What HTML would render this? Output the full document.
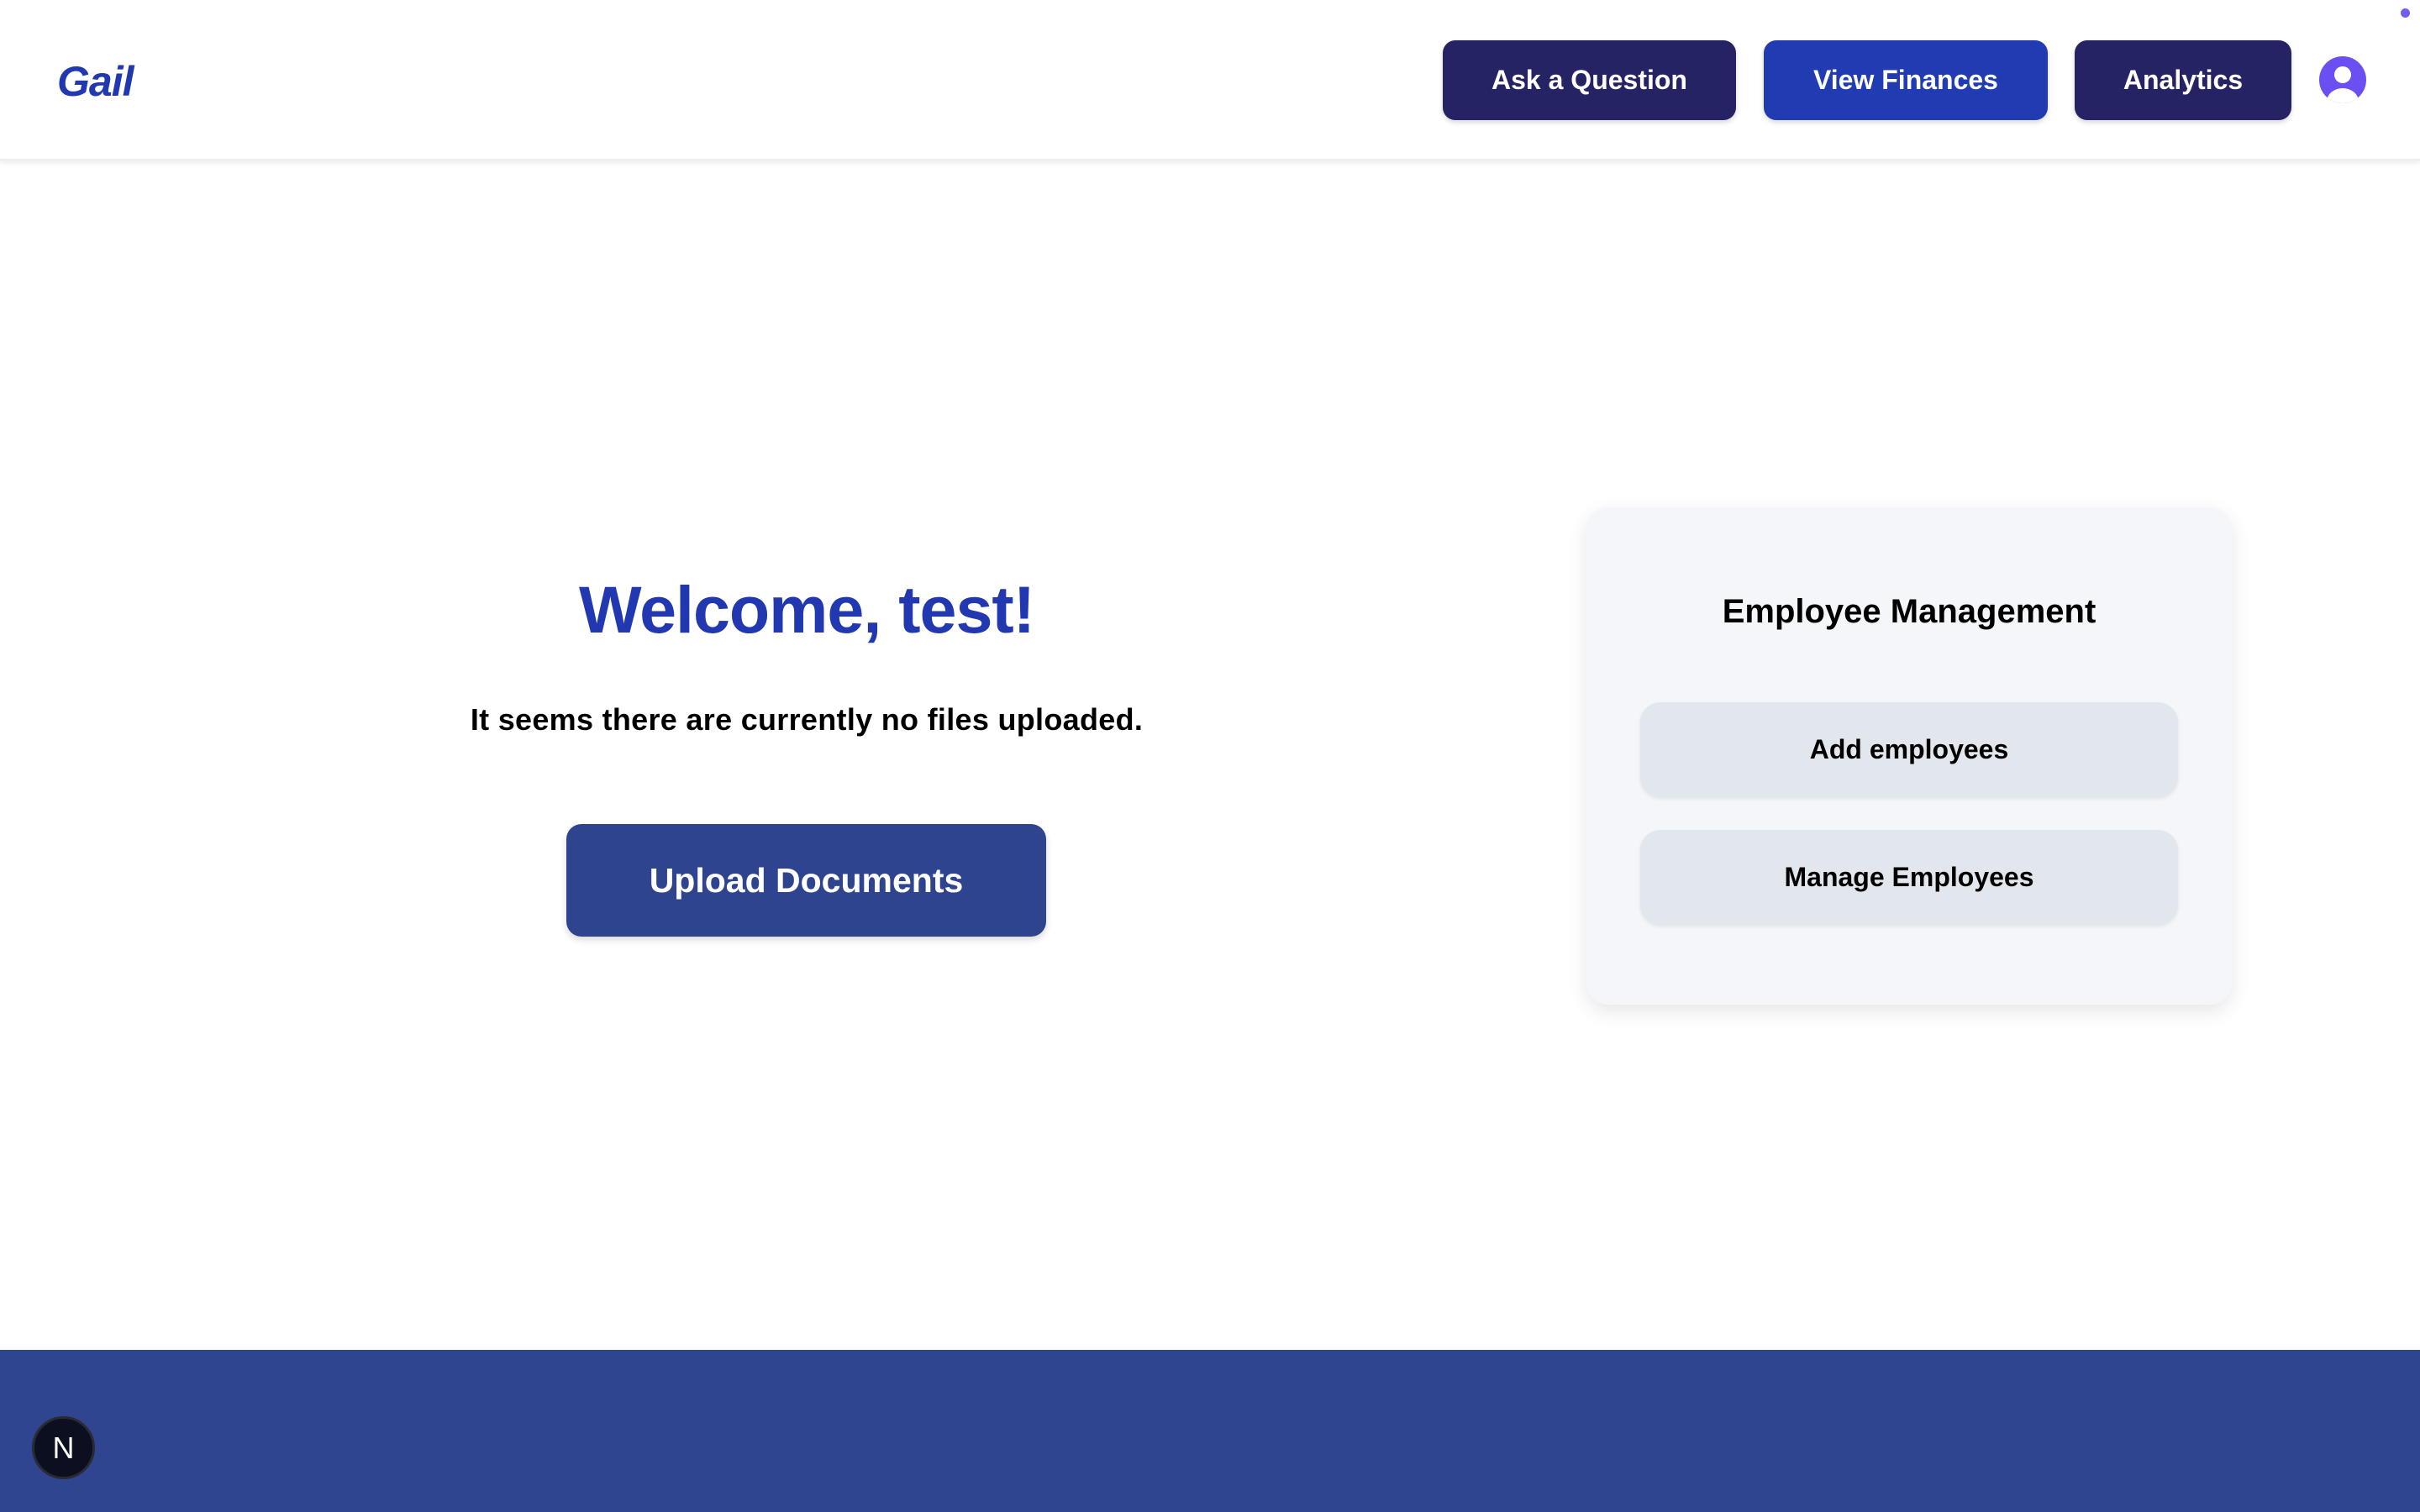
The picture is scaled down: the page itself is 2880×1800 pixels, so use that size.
<!DOCTYPE html>
<html><head><meta charset="utf-8"><style>
*{margin:0;padding:0;box-sizing:border-box}
html,body{width:2880px;height:1800px;overflow:hidden;background:#fff;font-family:"Liberation Sans",sans-serif;position:relative}
.hdr{position:absolute;left:0;top:0;width:2880px;height:191px;background:#fff;box-shadow:0 3px 6px rgba(0,0,0,.08);border-bottom:2px solid #eee}
.logo{position:absolute;left:68px;top:68px;font-size:50px;font-weight:bold;font-style:italic;color:#2238b0;letter-spacing:-1px}
.nb{position:absolute;top:48px;height:95px;border-radius:15px;color:#fff;font-size:32px;font-weight:bold;display:flex;align-items:center;justify-content:center;box-shadow:0 3px 6px rgba(0,0,0,.15)}
.abs{position:absolute}
.card{position:absolute;left:1888px;top:604px;width:768px;height:592px;background:#f4f6f9;border-radius:26px;box-shadow:0 8px 24px rgba(0,0,0,.1)}
.cb{position:absolute;left:64px;width:640px;height:112px;background:#e2e7ee;border-radius:24px;display:flex;align-items:center;justify-content:center;font-size:32px;font-weight:bold;color:#000;box-shadow:0 3px 5px rgba(0,0,0,.08)}
</style></head><body>
<div class="hdr">
<div class="logo">Gail</div>
<div class="nb" style="left:1717px;width:349px;background:#252364">Ask a Question</div>
<div class="nb" style="left:2099px;width:338px;background:#213cb2">View Finances</div>
<div class="nb" style="left:2469px;width:258px;background:#252364">Analytics</div>
<svg class="abs" style="left:2760px;top:67px" width="56" height="56" viewBox="0 0 56 56"><defs><clipPath id="c"><circle cx="28" cy="28" r="28"/></clipPath></defs><circle cx="28" cy="28" r="28" fill="#6c4ff2"/><g clip-path="url(#c)" fill="#fff"><circle cx="28" cy="22" r="10"/><ellipse cx="28" cy="54" rx="19" ry="16"/></g></svg>
</div>
<div class="abs" style="left:2857px;top:10px;width:11px;height:11px;border-radius:50%;background:#6c5ff0"></div>
<div class="abs" style="left:460px;width:1000px;top:680px;text-align:center;font-size:79px;font-weight:bold;color:#2238b0;letter-spacing:-1px">Welcome, test!</div>
<div class="abs" style="left:360px;width:1200px;top:836px;text-align:center;font-size:36px;font-weight:bold;color:#000;letter-spacing:0.3px">It seems there are currently no files uploaded.</div>
<div class="abs" style="left:674px;top:981px;width:571px;height:134px;background:#2f448f;border-radius:18px;color:#fff;font-size:41px;font-weight:bold;display:flex;align-items:center;justify-content:center;box-shadow:0 4px 8px rgba(0,0,0,.15)">Upload Documents</div>
<div class="card">
<div class="abs" style="left:0;width:768px;top:102px;text-align:center;font-size:40px;font-weight:bold;color:#000">Employee Management</div>
<div class="cb" style="top:232px">Add employees</div>
<div class="cb" style="top:384px">Manage Employees</div>
</div>
<div class="abs" style="left:0;top:1607px;width:2880px;height:193px;background:#30458f"></div>
<div class="abs" style="left:38px;top:1686px;width:75px;height:75px;border-radius:50%;background:#0b0f1f;border:3px solid #2a2a33;color:#fff;font-size:36px;display:flex;align-items:center;justify-content:center">N</div>
</body></html>
